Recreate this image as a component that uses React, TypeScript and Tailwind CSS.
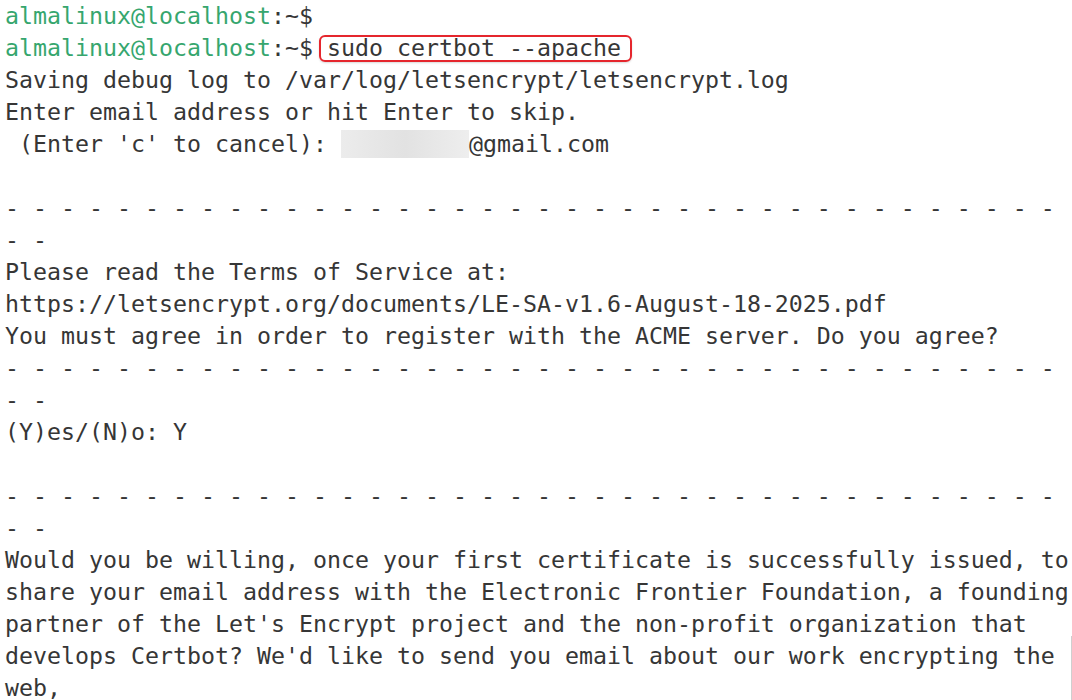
import React from "react";

const DASHES = "- - - - - - - - - - - - - - - - - - - - - - - - - - - - - - - - - - - - - -";

const Prompt = () => (
  <>
    <span className="text-[#36a66e]">almalinux@localhost</span>
    <span>:~$</span>
  </>
);

const App = () => {
  return (
    <div className="relative w-[1072px] h-[700px] overflow-hidden bg-white">
      <div className="pl-[5px] pt-0 font-['DejaVu_Sans_Mono',monospace] text-[23.25px] leading-[32px] text-[#363636] whitespace-pre">
        <div>
          <Prompt />
        </div>
        <div>
          <Prompt />{" "}
          <span className="relative inline-block">
            sudo certbot --apache
            <span className="absolute -left-[8px] -right-[11px] top-[3px] bottom-[2px] rounded-[6px] border-2 border-[#e5262d] shadow-[0_1px_2px_rgba(0,0,0,0.15)]"></span>
          </span>
        </div>
        <div>Saving debug log to /var/log/letsencrypt/letsencrypt.log</div>
        <div>Enter email address or hit Enter to skip.</div>
        <div>
          {" (Enter 'c' to cancel): "}
          <span className="inline-block w-[128px] h-[28px] align-middle -mt-[3px] bg-gradient-to-r from-[#ececec] via-[#e2e2e2] to-[#eeeeee]"></span>
          @gmail.com
        </div>
        <div>&nbsp;</div>
        <div>{DASHES}</div>
        <div>- -</div>
        <div>Please read the Terms of Service at:</div>
        <div>https://letsencrypt.org/documents/LE-SA-v1.6-August-18-2025.pdf</div>
        <div>You must agree in order to register with the ACME server. Do you agree?</div>
        <div>{DASHES}</div>
        <div>- -</div>
        <div>(Y)es/(N)o: Y</div>
        <div>&nbsp;</div>
        <div>{DASHES}</div>
        <div>- -</div>
        <div>Would you be willing, once your first certificate is successfully issued, to</div>
        <div>share your email address with the Electronic Frontier Foundation, a founding</div>
        <div>partner of the Let's Encrypt project and the non-profit organization that</div>
        <div>develops Certbot? We'd like to send you email about our work encrypting the</div>
        <div>web,</div>
      </div>
      <div className="absolute right-0 top-[636px] w-px h-[64px] bg-[#cfcfcf]"></div>
    </div>
  );
};

export default App;
